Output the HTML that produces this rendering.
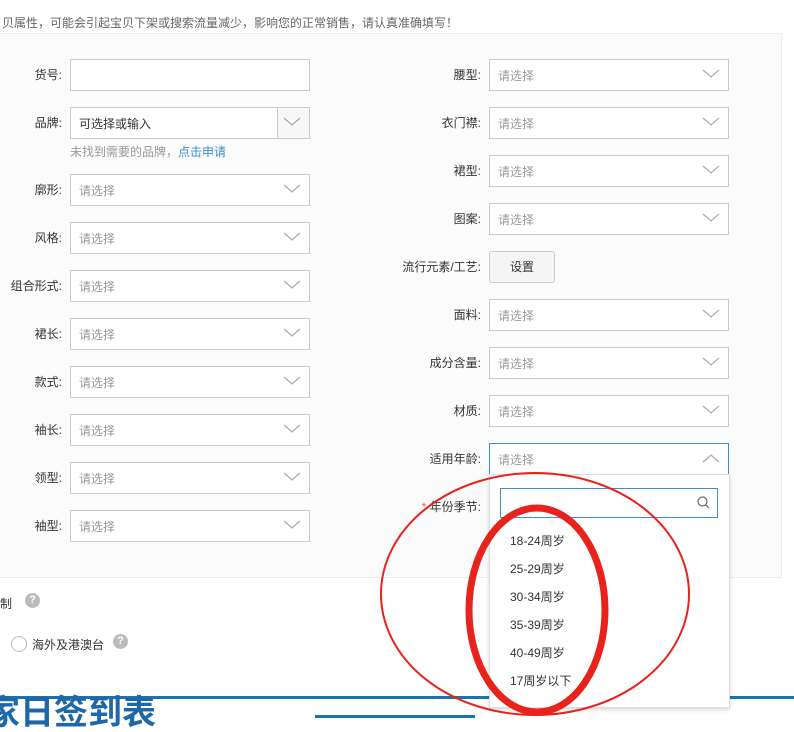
<!DOCTYPE html><html><head><meta charset="utf-8"><style>
body{margin:0;width:794px;height:718px;overflow:hidden;background:#fff;font-family:"Liberation Sans","Noto Sans CJK SC",sans-serif;font-size:12px;color:#333;position:relative}
.a{position:absolute}
.box{position:absolute;background:#fbfbfb;border:1px solid #eee;left:-1px;top:33px;width:781px;height:543px}
.lb{position:absolute;text-align:right;font-size:12px;color:#333;line-height:14px;margin-top:1px}
.in{position:absolute;width:238px;height:30px;border:1px solid #ccc;background:#fff;box-sizing:content-box}
.in span{position:absolute;left:8px;top:9px;color:#999;font-size:12px;line-height:14px}
.in svg{position:absolute;right:8px;top:9px}
.opt{position:absolute;left:510px;font-size:12px;color:#333}
</style></head><body>
<div class="a" style="left:2px;top:14px;color:#666;font-size:12px">贝属性，可能会引起宝贝下架或搜索流量减少，影响您的正常销售，请认真准确填写！</div>
<div class="box"></div>

<div class="lb" style="left:0;width:62px;top:67px">货号:</div>
<div class="in" style="left:70px;top:59px"></div>
<div class="lb" style="left:0;width:62px;top:115px">品牌:</div>
<div class="in" style="left:70px;top:107px"><span style="color:#333">可选择或输入</span><div class="a" style="left:206px;top:0;width:32px;height:30px;border-left:1px solid #ccc;background:#f7f7f7;box-sizing:border-box"></div><svg width="18" height="10" viewBox="0 0 18 10"><path d="M1 1l8 7 8-7" fill="none" stroke="#aaa" stroke-width="1.2"/></svg></div>
<div class="a" style="left:70px;top:143px;color:#999">未找到需要的品牌，<span style="color:#3a8fd0">点击申请</span></div>

<div class="lb" style="left:0;width:62px;top:182px">廓形:</div>
<div class="in" style="left:70px;top:174px"><span>请选择</span><svg width="18" height="10" viewBox="0 0 18 10"><path d="M1 1l8 7 8-7" fill="none" stroke="#aaa" stroke-width="1.2"/></svg></div>
<div class="lb" style="left:0;width:62px;top:230px">风格:</div>
<div class="in" style="left:70px;top:222px"><span>请选择</span><svg width="18" height="10" viewBox="0 0 18 10"><path d="M1 1l8 7 8-7" fill="none" stroke="#aaa" stroke-width="1.2"/></svg></div>
<div class="lb" style="left:0;width:62px;top:278px">组合形式:</div>
<div class="in" style="left:70px;top:270px"><span>请选择</span><svg width="18" height="10" viewBox="0 0 18 10"><path d="M1 1l8 7 8-7" fill="none" stroke="#aaa" stroke-width="1.2"/></svg></div>
<div class="lb" style="left:0;width:62px;top:326px">裙长:</div>
<div class="in" style="left:70px;top:318px"><span>请选择</span><svg width="18" height="10" viewBox="0 0 18 10"><path d="M1 1l8 7 8-7" fill="none" stroke="#aaa" stroke-width="1.2"/></svg></div>
<div class="lb" style="left:0;width:62px;top:374px">款式:</div>
<div class="in" style="left:70px;top:366px"><span>请选择</span><svg width="18" height="10" viewBox="0 0 18 10"><path d="M1 1l8 7 8-7" fill="none" stroke="#aaa" stroke-width="1.2"/></svg></div>
<div class="lb" style="left:0;width:62px;top:422px">袖长:</div>
<div class="in" style="left:70px;top:414px"><span>请选择</span><svg width="18" height="10" viewBox="0 0 18 10"><path d="M1 1l8 7 8-7" fill="none" stroke="#aaa" stroke-width="1.2"/></svg></div>
<div class="lb" style="left:0;width:62px;top:470px">领型:</div>
<div class="in" style="left:70px;top:462px"><span>请选择</span><svg width="18" height="10" viewBox="0 0 18 10"><path d="M1 1l8 7 8-7" fill="none" stroke="#aaa" stroke-width="1.2"/></svg></div>
<div class="lb" style="left:0;width:62px;top:518px">袖型:</div>
<div class="in" style="left:70px;top:510px"><span>请选择</span><svg width="18" height="10" viewBox="0 0 18 10"><path d="M1 1l8 7 8-7" fill="none" stroke="#aaa" stroke-width="1.2"/></svg></div>

<div class="lb" style="left:380px;width:101px;top:67px">腰型:</div>
<div class="in" style="left:489px;top:59px"><span>请选择</span><svg width="18" height="10" viewBox="0 0 18 10"><path d="M1 1l8 7 8-7" fill="none" stroke="#aaa" stroke-width="1.2"/></svg></div>
<div class="lb" style="left:380px;width:101px;top:115px">衣门襟:</div>
<div class="in" style="left:489px;top:107px"><span>请选择</span><svg width="18" height="10" viewBox="0 0 18 10"><path d="M1 1l8 7 8-7" fill="none" stroke="#aaa" stroke-width="1.2"/></svg></div>
<div class="lb" style="left:380px;width:101px;top:163px">裙型:</div>
<div class="in" style="left:489px;top:155px"><span>请选择</span><svg width="18" height="10" viewBox="0 0 18 10"><path d="M1 1l8 7 8-7" fill="none" stroke="#aaa" stroke-width="1.2"/></svg></div>
<div class="lb" style="left:380px;width:101px;top:211px">图案:</div>
<div class="in" style="left:489px;top:203px"><span>请选择</span><svg width="18" height="10" viewBox="0 0 18 10"><path d="M1 1l8 7 8-7" fill="none" stroke="#aaa" stroke-width="1.2"/></svg></div>
<div class="lb" style="left:380px;width:101px;top:259px">流行元素/工艺:</div>
<div class="a" style="left:489px;top:251px;width:64px;height:30px;border:1px solid #ccc;border-radius:3px;background:#f5f5f5;text-align:center;line-height:31px">设置</div>
<div class="lb" style="left:380px;width:101px;top:307px">面料:</div>
<div class="in" style="left:489px;top:299px"><span>请选择</span><svg width="18" height="10" viewBox="0 0 18 10"><path d="M1 1l8 7 8-7" fill="none" stroke="#aaa" stroke-width="1.2"/></svg></div>
<div class="lb" style="left:380px;width:101px;top:355px">成分含量:</div>
<div class="in" style="left:489px;top:347px"><span>请选择</span><svg width="18" height="10" viewBox="0 0 18 10"><path d="M1 1l8 7 8-7" fill="none" stroke="#aaa" stroke-width="1.2"/></svg></div>
<div class="lb" style="left:380px;width:101px;top:403px">材质:</div>
<div class="in" style="left:489px;top:395px"><span>请选择</span><svg width="18" height="10" viewBox="0 0 18 10"><path d="M1 1l8 7 8-7" fill="none" stroke="#aaa" stroke-width="1.2"/></svg></div>
<div class="lb" style="left:380px;width:101px;top:451px">适用年龄:</div>
<div class="in" style="left:489px;top:443px;border-color:#3a8fd0"><span>请选择</span><svg width="18" height="10" viewBox="0 0 18 10"><path d="M1 9l8-7 8 7" fill="none" stroke="#aaa" stroke-width="1.2"/></svg></div>
<div class="lb" style="left:380px;width:101px;top:499px"><span style="color:#f55">*</span> 年份季节:</div>

<div class="a" style="left:0;top:595px">制</div>
<div class="a" style="left:25px;top:593px;width:15px;height:15px;border-radius:50%;background:#bbb;color:#fff;font-size:11px;font-weight:bold;text-align:center;line-height:15px">?</div>
<div class="a" style="left:11px;top:636px;width:14px;height:14px;border-radius:50%;border:1px solid #bbb;background:#fff"></div>
<div class="a" style="left:32px;top:636px">海外及港澳台</div>
<div class="a" style="left:113px;top:634px;width:15px;height:15px;border-radius:50%;background:#bbb;color:#fff;font-size:11px;font-weight:bold;text-align:center;line-height:15px">?</div>

<div class="a" style="left:0;top:696px;width:794px;height:3px;background:#1a73b0"></div>
<div class="a" style="left:-14px;top:694px;font-size:34px;font-weight:bold;color:#1f68a8;line-height:38px">家日签到表</div>
<div class="a" style="left:315px;top:715px;width:160px;height:3px;background:#1a73b0"></div>

<div class="a" style="left:489px;top:474px;width:239px;height:232px;background:#fff;border:1px solid #ddd;box-shadow:0 2px 4px rgba(0,0,0,.15)"></div>
<div class="a" style="left:500px;top:488px;width:216px;height:28px;border:1px solid #3a8fd0;background:#fff"><svg class="a" style="left:196px;top:7px" width="13" height="13" viewBox="0 0 13 13"><circle cx="5.5" cy="5.5" r="4.5" fill="none" stroke="#666" stroke-width="1.2"/><path d="M9 9l3 3" stroke="#666" stroke-width="1.2"/></svg></div>
<div class="opt" style="top:532px">18-24周岁</div>
<div class="opt" style="top:560px">25-29周岁</div>
<div class="opt" style="top:588px">30-34周岁</div>
<div class="opt" style="top:616px">35-39周岁</div>
<div class="opt" style="top:644px">40-49周岁</div>
<div class="opt" style="top:672px">17周岁以下</div>

<svg class="a" style="left:0;top:0" width="794" height="718">
<ellipse cx="535" cy="594" rx="154" ry="121" fill="none" stroke="#e8231b" stroke-width="2"/>
<ellipse cx="537" cy="610" rx="68" ry="102" fill="none" stroke="#e8231b" stroke-width="7"/>
</svg>
</body></html>
